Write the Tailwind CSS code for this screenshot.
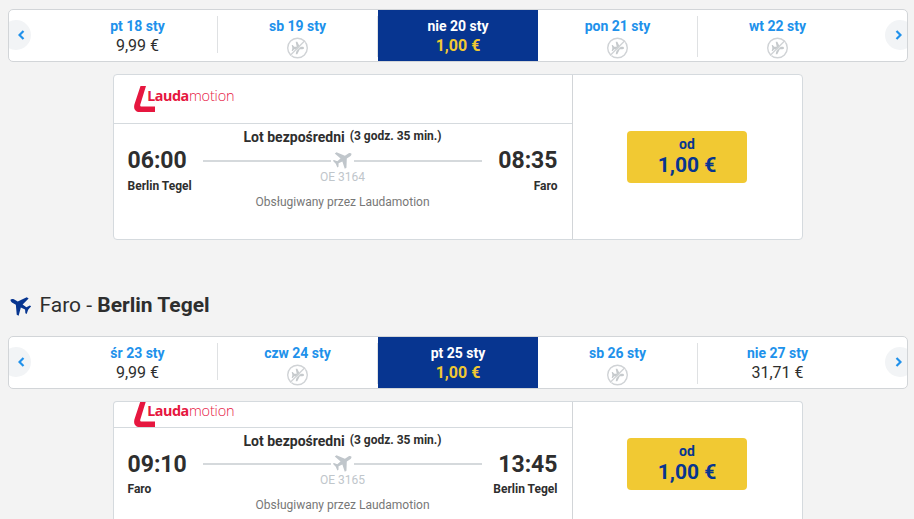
<!DOCTYPE html>
<html lang="pl">
<head>
    <meta charset="UTF-8">
    <meta name="viewport" content="width=device-width, initial-scale=1.0">
    <title>Wybierz lot</title>
    <script src="https://cdn.jsdelivr.net/npm/@tailwindcss/browser@4"></script>
</head>
<body class="h-[519px] overflow-hidden bg-[#f3f3f3] font-[Roboto,sans-serif] text-[#2e2e2e]">

    <!-- Shared icons -->
    <svg class="hidden">
        <symbol id="plane" viewBox="0 0 24 24">
            <path d="M22 16.200v-2.200l-8.100-5.700V3.800c0-1.100-.9-2.600-1.900-2.600s-1.900 1.500-1.900 2.600v4.500L2 14v2.200l8.200-2.200.5 4.600-3.200 2.200v1.500l4.500-.9 4.500.9v-1.500l-3.200-2.200.5-4.600z"/>
        </symbol>
        <symbol id="noFlight" viewBox="0 0 22 22">
            <circle cx="10.500" cy="11" r="9.800" fill="none" stroke="#d0d3d6" stroke-width="1.400"/>
            <path d="M17 11c0-.8-.8-1.200-1.500-1.200h-2.700L10.300 4.800H8.700l1 5H7.200L5.700 8H4.700L5.400 11l-.7 3h1l1.500-1.800h2.500l-1 5h1.600l2.500-5h2.700c.7 0 1.500-.4 1.500-1.200z" fill="#c6cacd"/>
            <path d="M4.200 19L18.200 5" stroke="#fff" stroke-width=".7"/>
            <path d="M3.600 18L17.500 4" stroke="#d0d3d6" stroke-width="1.300"/>
        </symbol>
        <symbol id="lauda" viewBox="0 0 102 26">
            <path d="M6.500 0H12L6.300 18.500c-.4 1.300.1 2 1.300 2H21V26H5.500C1.500 26-.700 23 .4 18.500z" fill="#e6173f"/>
            <text x="13.200" y="14.800" font-family="Noto Sans, sans-serif" font-size="14.400" font-weight="700" fill="#e6173f" textLength="42">Lauda</text>
            <text x="55" y="14.800" font-family="Open Sans, sans-serif" font-size="14.500" font-weight="300" fill="#e6173f" textLength="45.500">motion</text>
        </symbol>
    </svg>

    <main class="pl-2 pt-[9px] w-[908px]">

        <!-- Outbound dates -->
        <div class="relative flex h-[53px] overflow-hidden rounded-[5px] border border-[#d2d5d8] bg-white px-[49px] text-center">
            <button class="absolute -left-2 top-[10px] flex size-[30px] items-center justify-center rounded-full bg-[#f2f4f6] pl-[11px]">
                <svg class="h-[10px] w-[7px]" viewBox="0 0 7 10" fill="none" stroke="#2091eb" stroke-width="2.2"><path d="M5.500 1L1.500 5l4 4"/></svg>
            </button>
            <div class="w-40 pt-[6px]">
                <div class="h-[37px] border-r border-[#dfe1e3]">
                    <div class="text-sm leading-5 font-bold text-[#2091eb]">pt 18 sty</div>
                    <div class="text-base leading-5">9,99 €</div>
                </div>
            </div>
            <div class="w-40 pt-[6px]">
                <div class="h-[41px] border-r border-[#dfe1e3]">
                    <div class="text-sm leading-5 font-bold text-[#2091eb]">sb 19 sty</div>
                    <svg class="mx-auto mt-px size-[22px]"><use href="#noFlight"/></svg>
                </div>
            </div>
            <div class="w-40 bg-[#073590] pt-[6px]">
                <div class="text-sm leading-5 font-bold text-white">nie 20 sty</div>
                <div class="text-base leading-5 font-bold text-[#f1c933]">1,00 €</div>
            </div>
            <div class="w-40 pt-[6px]">
                <div class="h-[41px] border-r border-[#dfe1e3]">
                    <div class="text-sm leading-5 font-bold text-[#2091eb]">pon 21 sty</div>
                    <svg class="mx-auto mt-px size-[22px]"><use href="#noFlight"/></svg>
                </div>
            </div>
            <div class="w-40 pt-[6px] pr-px">
                <div class="text-sm leading-5 font-bold text-[#2091eb]">wt 22 sty</div>
                <svg class="mx-auto mt-px size-[22px]"><use href="#noFlight"/></svg>
            </div>
            <button class="absolute -right-2 top-[10px] flex size-[30px] items-center justify-center rounded-full bg-[#f2f4f6] pr-[4px]">
                <svg class="h-[10px] w-[7px]" viewBox="0 0 7 10" fill="none" stroke="#2091eb" stroke-width="2.2"><path d="M1.500 1l4 4-4 4"/></svg>
            </button>
        </div>

        <!-- Outbound flight -->
        <div class="mt-3 ml-[105px] flex h-[166px] w-[690px] rounded-[4px] border border-[#d5dade] bg-white">
            <div class="w-[459px] border-r border-[#d2d5d8]">
                <div class="h-[49px] border-b border-[#d5dade] pt-[11px] pl-5">
                    <svg class="h-[26px] w-[102px]"><use href="#lauda"/></svg>
                </div>
                <div class="flex justify-between pr-[14.5px] pl-[13.5px]">
                    <div class="w-[75px] pt-[23px]">
                        <div class="text-[23px] leading-7 font-bold">06:00</div>
                        <div class="mt-[3px] text-xs leading-4 font-bold whitespace-nowrap">Berlin Tegel</div>
                    </div>
                    <div class="w-[279px] pt-1 text-center">
                        <div class="flex justify-center gap-[5px] font-bold whitespace-nowrap">
                            <span class="text-sm leading-[19px]">Lot bezpośredni</span>
                            <span class="text-xs leading-[17px]">(3 godz. 35 min.)</span>
                        </div>
                        <div class="mt-[4px] flex h-5 items-center justify-between">
                            <div class="h-[2px] w-32 bg-[#d5d9dc]"></div>
                            <svg class="-mt-[5px] size-[22px] rotate-[57deg] fill-[#c0c6cb]"><use href="#plane"/></svg>
                            <div class="h-[2px] w-32 bg-[#d5d9dc]"></div>
                        </div>
                        <div class="mt-[-2px] text-xs leading-4 text-[#c0c6cb]">OE 3164</div>
                        <div class="mt-[9px] text-xs leading-4 text-[#777]">Obsługiwany przez Laudamotion</div>
                    </div>
                    <div class="w-[75px] pt-[23px] text-right">
                        <div class="text-[23px] leading-7 font-bold">08:35</div>
                        <div class="mt-[3px] text-xs leading-4 font-bold whitespace-nowrap">Faro</div>
                    </div>
                </div>
            </div>
            <div class="pt-14 pl-[54px]">
                <button class="h-[52px] w-[120px] rounded-[4px] bg-[#f1c933] pb-[2px] font-bold text-[#073590]">
                    <div class="text-sm leading-[18px]">od</div>
                    <div class="text-[21px] leading-6">1,00 €</div>
                </button>
            </div>
        </div>

        <!-- Return heading -->
        <h2 class="mt-[50px] flex h-[30px] items-center text-[21px] leading-[30px]">
            <svg class="mr-[7.5px] size-6 -rotate-[60deg] fill-[#073590]"><use href="#plane"/></svg>
            <span class="whitespace-pre">Faro - <b>Berlin Tegel</b></span>
        </h2>

        <!-- Return dates -->
        <div class="relative mt-4 flex h-[53px] overflow-hidden rounded-[5px] border border-[#d2d5d8] bg-white px-[49px] text-center">
            <button class="absolute -left-2 top-[10px] flex size-[30px] items-center justify-center rounded-full bg-[#f2f4f6] pl-[11px]">
                <svg class="h-[10px] w-[7px]" viewBox="0 0 7 10" fill="none" stroke="#2091eb" stroke-width="2.2"><path d="M5.500 1L1.500 5l4 4"/></svg>
            </button>
            <div class="w-40 pt-[6px]">
                <div class="h-[37px] border-r border-[#dfe1e3]">
                    <div class="text-sm leading-5 font-bold text-[#2091eb]">śr 23 sty</div>
                    <div class="text-base leading-5">9,99 €</div>
                </div>
            </div>
            <div class="w-40 pt-[6px]">
                <div class="h-[41px] border-r border-[#dfe1e3]">
                    <div class="text-sm leading-5 font-bold text-[#2091eb]">czw 24 sty</div>
                    <svg class="mx-auto mt-px size-[22px]"><use href="#noFlight"/></svg>
                </div>
            </div>
            <div class="w-40 bg-[#073590] pt-[6px]">
                <div class="text-sm leading-5 font-bold text-white">pt 25 sty</div>
                <div class="text-base leading-5 font-bold text-[#f1c933]">1,00 €</div>
            </div>
            <div class="w-40 pt-[6px]">
                <div class="h-[41px] border-r border-[#dfe1e3]">
                    <div class="text-sm leading-5 font-bold text-[#2091eb]">sb 26 sty</div>
                    <svg class="mx-auto mt-px size-[22px]"><use href="#noFlight"/></svg>
                </div>
            </div>
            <div class="w-40 pt-[6px] pr-px">
                <div class="text-sm leading-5 font-bold text-[#2091eb]">nie 27 sty</div>
                <div class="text-base leading-5">31,71 €</div>
            </div>
            <button class="absolute -right-2 top-[10px] flex size-[30px] items-center justify-center rounded-full bg-[#f2f4f6] pr-[4px]">
                <svg class="h-[10px] w-[7px]" viewBox="0 0 7 10" fill="none" stroke="#2091eb" stroke-width="2.2"><path d="M1.500 1l4 4-4 4"/></svg>
            </button>
        </div>

        <!-- Return flight -->
        <div class="mt-3 ml-[105px] flex h-[118px] w-[690px] rounded-t-[4px] border border-b-0 border-[#d5dade] bg-white">
            <div class="w-[459px] border-r border-[#d2d5d8]">
                <div class="h-[26px] overflow-hidden border-b border-[#d5dade] pl-5">
                    <svg class="-mt-[1px] h-[26px] w-[102px]"><use href="#lauda"/></svg>
                </div>
                <div class="flex justify-between pr-[14.5px] pl-[13.5px]">
                    <div class="w-[75px] pt-[23px]">
                        <div class="text-[23px] leading-7 font-bold">09:10</div>
                        <div class="mt-[2px] text-xs leading-4 font-bold whitespace-nowrap">Faro</div>
                    </div>
                    <div class="w-[279px] pt-1 text-center">
                        <div class="flex justify-center gap-[5px] font-bold whitespace-nowrap">
                            <span class="text-sm leading-[19px]">Lot bezpośredni</span>
                            <span class="text-xs leading-[17px]">(3 godz. 35 min.)</span>
                        </div>
                        <div class="mt-[3px] flex h-5 items-center justify-between">
                            <div class="h-[2px] w-32 bg-[#d5d9dc]"></div>
                            <svg class="-mt-[5px] size-[22px] rotate-[57deg] fill-[#c0c6cb]"><use href="#plane"/></svg>
                            <div class="h-[2px] w-32 bg-[#d5d9dc]"></div>
                        </div>
                        <div class="mt-[-2px] text-xs leading-4 text-[#c0c6cb]">OE 3165</div>
                        <div class="mt-[9px] text-xs leading-4 text-[#777]">Obsługiwany przez Laudamotion</div>
                    </div>
                    <div class="flex w-[75px] flex-col items-end pt-[23px]">
                        <div class="text-[23px] leading-7 font-bold">13:45</div>
                        <div class="mt-[2px] text-xs leading-4 font-bold whitespace-nowrap">Berlin Tegel</div>
                    </div>
                </div>
            </div>
            <div class="pt-9 pl-[54px]">
                <button class="h-[52px] w-[120px] rounded-[4px] bg-[#f1c933] pb-[2px] font-bold text-[#073590]">
                    <div class="text-sm leading-[18px]">od</div>
                    <div class="text-[21px] leading-6">1,00 €</div>
                </button>
            </div>
        </div>
    </main>

</body>
</html>
